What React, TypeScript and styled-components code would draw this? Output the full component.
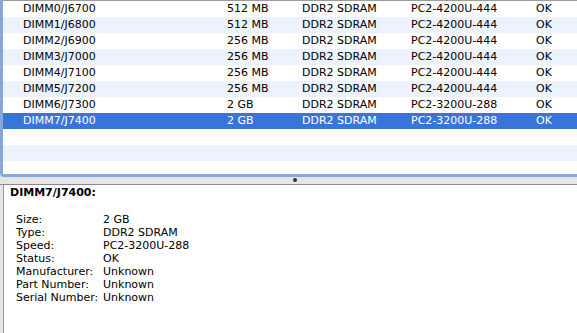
import React from "react";
import styled, {createGlobalStyle} from "styled-components";

const GlobalStyle = createGlobalStyle`
    html, body {
        margin: 0;
        padding: 0;
        background: #e6e6e6;
    }
    body {
        font-family: "DejaVu Sans", "Liberation Sans", sans-serif;
        font-size: 11px;
        color: #000;
    }
`;

const Window = styled.div`
    width: 577px;
    height: 333px;
    overflow: hidden;
    display: flex;
    flex-direction: column;
`;

const TableFrame = styled.div`
    height: 173px;
    border-top: 1px solid #9c9c9c;
    border-left: 3px solid #86a8d8;
    border-bottom: 3px solid #86a8d8;
    border-bottom-left-radius: 4px;
    box-shadow: inset 0 -1px 0 #b9cde9;
    background: #fff;
    overflow: hidden;
`;

const Row = styled.div<{ $stripe: boolean; $selected?: boolean }>`
    display: grid;
    grid-template-columns: 204px 75px 109px 125px 1fr;
    height: 16px;
    line-height: 16px;
    padding-left: 20px;
    white-space: nowrap;
    background: ${p => p.$selected ? '#3875d7' : p.$stripe ? '#edf3fe' : '#fff'};
    color: ${p => p.$selected ? '#fff' : '#000'};
`;

const Splitter = styled.div`
    height: 7px;
    background: #e4e4e4;
    border-bottom: 1px solid #8a8a8a;
    display: flex;
    justify-content: center;
    align-items: center;
`;

const Dimple = styled.div`
    width: 4px;
    height: 4px;
    border-radius: 50%;
    background: #333;
    margin-left: 12px;
    margin-top: -1px;
`;

const Detail = styled.div`
    flex: 1;
    margin-left: 3px;
    border-left: 1px solid #9a9a9a;
    background: #fff;
    padding: 1px 0 0 6px;
    line-height: 13px;
`;

const DetailTitle = styled.div`
    font-weight: bold;
    margin-bottom: 14px;
`;

const Props = styled.div`
    display: grid;
    grid-template-columns: 87px 1fr;
    padding-left: 6px;
    line-height: 13px;
`;

const rows = [
    ['DIMM0/J6700', '512 MB', 'DDR2 SDRAM', 'PC2-4200U-444', 'OK'],
    ['DIMM1/J6800', '512 MB', 'DDR2 SDRAM', 'PC2-4200U-444', 'OK'],
    ['DIMM2/J6900', '256 MB', 'DDR2 SDRAM', 'PC2-4200U-444', 'OK'],
    ['DIMM3/J7000', '256 MB', 'DDR2 SDRAM', 'PC2-4200U-444', 'OK'],
    ['DIMM4/J7100', '256 MB', 'DDR2 SDRAM', 'PC2-4200U-444', 'OK'],
    ['DIMM5/J7200', '256 MB', 'DDR2 SDRAM', 'PC2-4200U-444', 'OK'],
    ['DIMM6/J7300', '2 GB', 'DDR2 SDRAM', 'PC2-3200U-288', 'OK'],
    ['DIMM7/J7400', '2 GB', 'DDR2 SDRAM', 'PC2-3200U-288', 'OK'],
];

const details = [
    ['Size:', '2 GB'],
    ['Type:', 'DDR2 SDRAM'],
    ['Speed:', 'PC2-3200U-288'],
    ['Status:', 'OK'],
    ['Manufacturer:', 'Unknown'],
    ['Part Number:', 'Unknown'],
    ['Serial Number:', 'Unknown'],
];

const App = () => {
    const selected = 7;
    return (
        <Window>
            <GlobalStyle/>
            <TableFrame>
                {rows.map((r, i) => (
                    <Row key={r[0]} $stripe={i % 2 === 1} $selected={i === selected}>
                        {r.map((c, j) => <span key={j}>{c}</span>)}
                    </Row>
                ))}
                {[8, 9, 10].map(i => (
                    <Row key={i} $stripe={i % 2 === 1}/>
                ))}
            </TableFrame>
            <Splitter>
                <Dimple/>
            </Splitter>
            <Detail>
                <DetailTitle>DIMM7/J7400:</DetailTitle>
                <Props>
                    {details.map(([k, v]) => (
                        <React.Fragment key={k}>
                            <span>{k}</span>
                            <span>{v}</span>
                        </React.Fragment>
                    ))}
                </Props>
            </Detail>
        </Window>
    )
}

export default App;
